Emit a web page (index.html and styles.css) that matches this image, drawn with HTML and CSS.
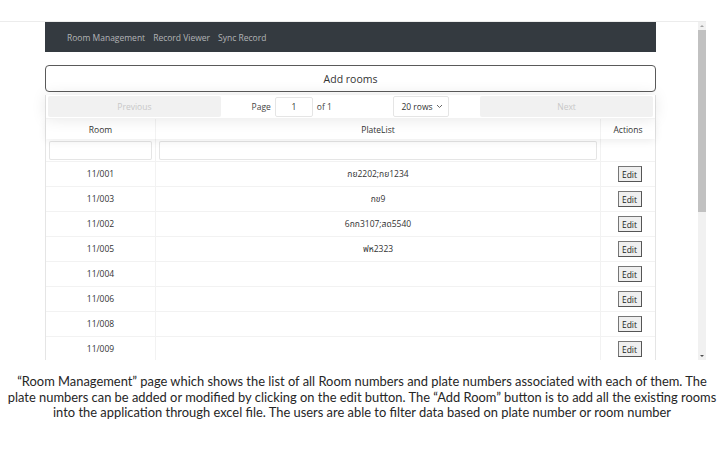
FILE: index.html
```html
<!DOCTYPE html>
<html>
<head>
<meta charset="utf-8">
<link rel="stylesheet" href="styles.css">
</head>
<body>
<div class="shot">
  <div class="viewport">
    <div class="app">
      <nav class="navbar">
        <a class="nav-link">Room Management</a>
        <a class="nav-link">Record Viewer</a>
        <a class="nav-link">Sync Record</a>
      </nav>
      <button class="add-btn">Add rooms</button>
      <div class="rt">
        <div class="pagination">
          <div class="pg-prev"><button class="pg-btn">Previous</button></div>
          <div class="pg-center">
            <span class="page-info">Page <span class="page-input">1</span> of 1</span>
            <span class="rows-select"><span>20 rows</span><svg class="chev" width="7" height="5" viewBox="0 0 7 5"><path d="M1 1 L3.5 3.5 L6 1" fill="none" stroke="#666" stroke-width="1"/></svg></span>
          </div>
          <div class="pg-next"><button class="pg-btn">Next</button></div>
        </div>
        <div class="thead">
          <div class="th c1">Room</div>
          <div class="th c2">PlateList</div>
          <div class="th c3">Actions</div>
        </div>
        <div class="filters">
          <div class="fc c1"><span class="finput"></span></div>
          <div class="fc c2"><span class="finput"></span></div>
          <div class="fc c3"></div>
        </div>
        <div class="tbody">
          <div class="tr"><div class="td c1">11/001</div><div class="td c2">กย2202;กย1234</div><div class="td c3"><button class="edit">Edit</button></div></div>
          <div class="tr"><div class="td c1">11/003</div><div class="td c2">กข9</div><div class="td c3"><button class="edit">Edit</button></div></div>
          <div class="tr"><div class="td c1">11/002</div><div class="td c2">6กก3107;สด5540</div><div class="td c3"><button class="edit">Edit</button></div></div>
          <div class="tr"><div class="td c1">11/005</div><div class="td c2">ฟห2323</div><div class="td c3"><button class="edit">Edit</button></div></div>
          <div class="tr"><div class="td c1">11/004</div><div class="td c2"></div><div class="td c3"><button class="edit">Edit</button></div></div>
          <div class="tr"><div class="td c1">11/006</div><div class="td c2"></div><div class="td c3"><button class="edit">Edit</button></div></div>
          <div class="tr"><div class="td c1">11/008</div><div class="td c2"></div><div class="td c3"><button class="edit">Edit</button></div></div>
          <div class="tr"><div class="td c1">11/009</div><div class="td c2"></div><div class="td c3"><button class="edit">Edit</button></div></div>
        </div>
      </div>
    </div>
  </div>
  <div class="scrollbar">
    <div class="sb-arrow up"></div>
    <div class="sb-thumb"></div>
    <div class="sb-track"></div>
    <div class="sb-arrow down"></div>
  </div>
</div>
<p class="caption">“Room Management” page which shows the list of all Room numbers and plate numbers associated with each of them. The<br>plate numbers can be added or modified by clicking on the edit button. The “Add Room” button is to add all the existing rooms<br>into the application through excel file. The users are able to filter data based on plate number or room number</p>
</body>
</html>
```
FILE: styles.css
```css
* { box-sizing: border-box; }
body {
  margin: 0;
  background: #fff;
  font-family: "Open Sans", "Noto Sans", "Noto Sans Thai", "DejaVu Sans", sans-serif;
  color: #333;
}
.shot {
  margin-top: 21px;
  width: 706px;
  height: 339px;
  display: flex;
  border-top: 1px solid #ececec;
}
.viewport {
  flex: 1;
  overflow: hidden;
  padding-left: 45px;
}
.app {
  width: 611px;
}
.navbar {
  background: #343a40;
  display: flex;
  align-items: center;
  padding-left: 22px;
  padding-top: 1px;
  gap: 8px;
  margin-top: -1px;
  height: 31px;
}
.nav-link {
  color: rgba(255,255,255,0.62);
  font-size: 8.5px;
}
.add-btn {
  display: block;
  width: 611px;
  height: 27px;
  margin-top: 13px;
  background: #fff;
  border: 1px solid #5a5a5a;
  border-radius: 4px;
  font-family: inherit;
  font-size: 10.5px;
  color: #333;
  padding: 0;
}
.rt {
  margin-top: 3px;
  border-left: 1px solid rgba(0,0,0,0.1);
  border-right: 1px solid rgba(0,0,0,0.1);
}
.pagination {
  display: flex;
  padding: 1px 2px;
  height: 24px;
  box-shadow: 0 0 15px 0 rgba(0,0,0,0.1);
  border-bottom: 1px solid rgba(0,0,0,0.05);
  position: relative;
  z-index: 1;
  background: #fff;
}
.pg-prev, .pg-next { flex: 1; display: flex; }
.pg-center {
  flex: 1.5;
  display: flex;
  align-items: center;
  justify-content: space-around;
  font-size: 8.5px;
  color: #444;
}
.pg-btn {
  width: 100%;
  border: 0;
  border-radius: 2px;
  background: #f1f1f1;
  color: #c8c8c8;
  font-family: inherit;
  font-size: 8.5px;
  padding: 0;
}
.page-info { display: flex; align-items: center; gap: 4px; }
.page-input {
  display: inline-flex;
  align-items: center;
  justify-content: center;
  width: 38px;
  height: 20px;
  border: 1px solid rgba(0,0,0,0.1);
  border-radius: 2px;
  color: #333;
}
.rows-select {
  display: inline-flex;
  align-items: center;
  justify-content: space-between;
  width: 56px;
  height: 21px;
  padding: 0 5px 0 7px;
  border: 1px solid rgba(0,0,0,0.1);
  border-radius: 2px;
  color: #333;
}
.chev { display: block; }
.thead {
  display: flex;
  height: 20px;
  box-shadow: 0 2px 8px 0 rgba(0,0,0,0.08);
  position: relative;
  background: #fff;
}
.c1 { width: 110px; }
.c2 { width: 445px; }
.c3 { flex: 1; }
.th {
  font-size: 8.5px;
  color: #333;
  display: flex;
  align-items: center;
  justify-content: center;
  border-right: 1px solid rgba(0,0,0,0.05);
}
.th.c3 { border-right: 0; }
.filters {
  display: flex;
  height: 23px;
  border-bottom: 1px solid rgba(0,0,0,0.05);
}
.fc {
  display: flex;
  align-items: center;
  padding: 0 3px;
  border-right: 1px solid rgba(0,0,0,0.05);
}
.fc.c3 { border-right: 0; }
.finput {
  display: block;
  width: 100%;
  height: 19px;
  border: 1px solid rgba(0,0,0,0.1);
  border-radius: 2px;
  background: #fff;
}
.tr {
  display: flex;
  height: 25px;
  border-bottom: 1px solid rgba(0,0,0,0.05);
}
.td {
  font-size: 8.5px;
  color: #333;
  display: flex;
  justify-content: center;
  padding-top: 6px;
  border-right: 1px solid rgba(0,0,0,0.05);
}
.td.c3 { border-right: 0; align-items: flex-start; padding-top: 0; padding-left: 3px; }
.edit {
  width: 24px;
  height: 16px;
  padding: 0;
  background: #efefef;
  border: 1px solid #767676;
  border-right-color: #555;
  border-bottom-color: #555;
  font-family: inherit;
  font-size: 8.5px;
  color: #222;
  margin-top: 4px;
}
.scrollbar {
  width: 8px;
  display: flex;
  flex-direction: column;
  background: #f1f1f1;
}
.sb-arrow { height: 8px; position: relative; }
.sb-arrow::after {
  content: "";
  position: absolute;
  left: 2px;
  border-left: 2px solid transparent;
  border-right: 2px solid transparent;
}
.sb-arrow.up::after { top: 3px; border-bottom: 2px solid #a3a3a3; }
.sb-arrow.down::after { top: 3px; border-top: 2px solid #505050; }
.sb-thumb { height: 182px; background: #c1c1c1; }
.sb-track { flex: 1; }
.caption {
  margin: 14px 0 0;
  text-align: center;
  font-family: "Lato", "Liberation Sans", sans-serif;
  font-size: 12.9px;
  line-height: 15.5px;
  color: #262626;
}
```
